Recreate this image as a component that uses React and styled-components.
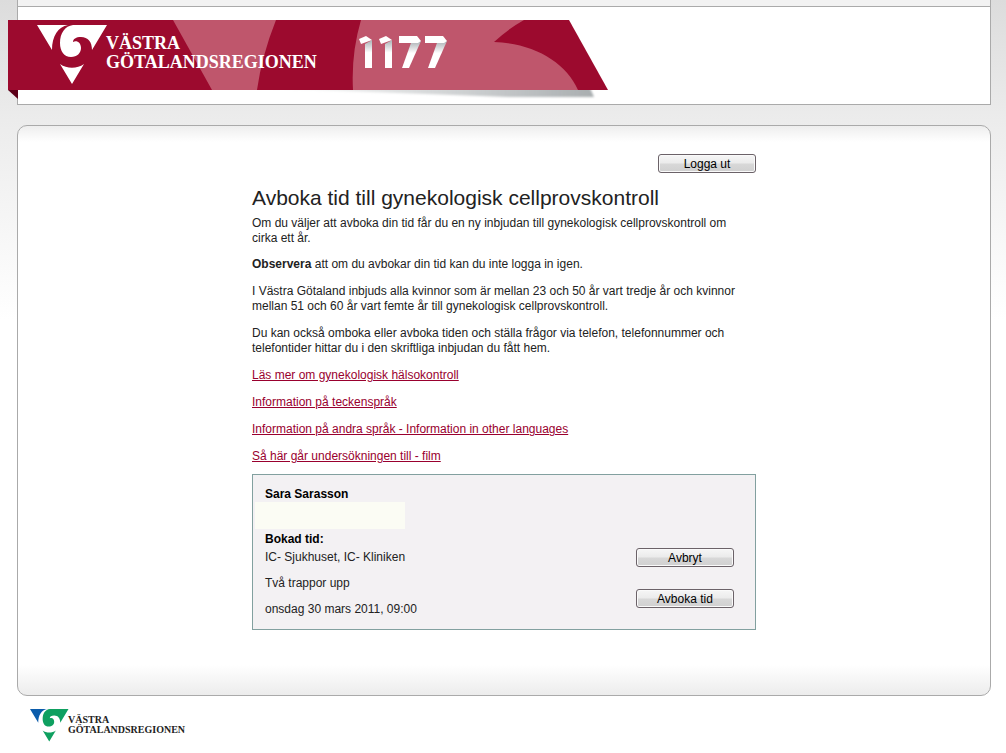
import React from "react";
import styled, { createGlobalStyle } from "styled-components";

const GlobalStyle = createGlobalStyle`
  body {
    margin: 0;
    background: linear-gradient(#dcdcdc, #ececec 120px, #ffffff 320px) no-repeat #ffffff;
    background-size: 100% 320px;
    color: #222222;
    font-family: "Liberation Sans", Arial, sans-serif;
    font-size: 12px;
    line-height: 15px;
  }
`;

const Page = styled.div`
  padding: 0 15px 0 17px;
`;

const Header = styled.header`
  border: 1px solid #aaaaaa;
  border-top: 0;
`;

const TopStrip = styled.div`
  height: 6px;
  background: #f2f2f2;
  border-bottom: 1px solid #aaaaaa;
`;

const HeaderBody = styled.div`
  padding: 13px 0 4px;
  background: #ffffff;
`;

const Banner = styled.svg`
  display: block;
  margin-left: -10px;
`;

const LogoText = styled.text`
  font-family: "Liberation Serif", "Times New Roman", serif;
  font-size: ${(props) => props.$size}px;
  font-weight: bold;
`;

const Main = styled.main`
  margin-top: 20px;
  padding: 28px 0 65px;
  border: 1px solid #aaaaaa;
  border-radius: 10px;
  background: linear-gradient(#eeeeee, #ffffff) top / 100% 16px no-repeat,
    linear-gradient(#ffffff, #ececec) bottom / 100% 30px no-repeat, #ffffff;
`;

const Content = styled.div`
  max-width: 504px;
  margin: 0 auto;
`;

const Toolbar = styled.div`
  display: flex;
  justify-content: flex-end;
`;

const Button = styled.button`
  width: 98px;
  height: 19px;
  padding: 0;
  border: 1px solid #6b6268;
  border-radius: 3px;
  background: linear-gradient(#f6f6f6 0%, #ebebeb 48%, #d8d8d8 52%, #d0d0d0 100%);
  box-shadow: inset 0 0 0 1px #fafafa;
  color: #000000;
  font: 12px "Liberation Sans", Arial, sans-serif;
`;

const Title = styled.h1`
  margin: 12px 0 6px;
  font-size: 21px;
  font-weight: normal;
  line-height: 25px;
`;

const Text = styled.p`
  margin: 0 0 12px;
  padding-right: 8px;
`;

const Lead = styled(Text)`
  margin-bottom: 11px;
`;

const LinkList = styled.ul`
  display: grid;
  gap: 12px;
  margin: 0 0 10px;
  padding: 0;
  list-style: none;
`;

const TextLink = styled.a`
  color: #99002e;
  text-decoration: underline;
`;

const Booking = styled.section`
  display: flex;
  justify-content: space-between;
  align-items: flex-end;
  padding: 12px 21px 12px 12px;
  border: 1px solid #82a09f;
  background: #f3f1f3;
`;

const PersonName = styled.h2`
  margin: 0;
  font-size: 12px;
  color: #000000;
`;

const HiddenNumber = styled.div`
  width: 150px;
  height: 27px;
  margin: 0 0 3px -10px;
  background: #fbfcf4;
`;

const BookingLabel = styled.h3`
  margin: 0 0 3px;
  font-size: 12px;
  color: #000000;
`;

const BookingLines = styled.div`
  display: grid;
  gap: 11px;
`;

const Actions = styled.div`
  display: grid;
  gap: 22px;
  padding-bottom: 9px;
`;

const Footer = styled.footer`
  padding: 13px 12px 8px;
`;

const FooterLogo = styled.svg`
  display: block;
`;

const links = [
  "Läs mer om gynekologisk hälsokontroll",
  "Information på teckenspråk",
  "Information på andra språk - Information in other languages",
  "Så här går undersökningen till - film",
];

const bookingLines = ["IC- Sjukhuset, IC- Kliniken", "Två trappor upp", "onsdag 30 mars 2011, 09:00"];

function Emblem({ left, right }) {
  return (
    <>
      <path fill={left} d="M0 0H31C21 2 15 11 15 25Z" />
      <path
        fill={right}
        d="M36 0H70L55 25C55 17 51 12 44 12C39 12 36 14 36 17C40 15 44 18 44 23C44 28 40 32 34 32C27 32 23 26 23 18C23 8 28 1 36 0Z"
      />
      <path fill={right} d="M23 39C30 44 40 44 47 39L35 59Z" />
    </>
  );
}

function HeaderBanner() {
  return (
    <Banner width="600" height="80" viewBox="0 0 600 80" role="img" aria-label="Västra Götalandsregionen 1177">
      <defs>
        <linearGradient id="shadow" x1="0" x2="1" y1="0" y2="0">
          <stop offset="0" stopColor="#b5b9bb" stopOpacity="0" />
          <stop offset="1" stopColor="#a9aeb0" />
        </linearGradient>
        <linearGradient id="fold" x1="0" x2="0" y1="0" y2="1">
          <stop offset="0" stopColor="#aab0b4" />
          <stop offset="0.45" stopColor="#ffffff" />
        </linearGradient>
        <filter id="soft" x="-5%" y="-50%" width="110%" height="200%">
          <feGaussianBlur stdDeviation="1" />
        </filter>
      </defs>
      <path fill="url(#shadow)" filter="url(#soft)" d="M250 68H582L586 77H500Z" />
      <path fill="#5c0018" d="M0 70H10V79Z" />
      <path fill="#9c0a2e" d="M0 0H561L600 70H0Z" />
      <path fill="#bf566c" d="M165 0H268Q254 35 249 70H204Z" />
      <path fill="#bf566c" d="M353 0H516Q500 9 486 22C525 23 558 42 570 70H345Q343 34 353 0Z" />
      <g transform="translate(29 5)">
        <Emblem left="#ffffff" right="#ffffff" />
      </g>
      <LogoText $size={18} fill="#ffffff" x="98" y="29">
        VÄSTRA
      </LogoText>
      <LogoText $size={18} fill="#ffffff" x="98" y="48">
        GÖTALANDSREGIONEN
      </LogoText>
      <path fill="url(#fold)" d="M357 24L364 20V48H357Z" />
      <path fill="url(#fold)" d="M377 24L384 20V48H377Z" />
      <path fill="url(#fold)" d="M403 23L413 21L401 48H394Z" />
      <path fill="url(#fold)" d="M429 23L439 21L427 48H420Z" />
      <path fill="#ffffff" d="M351 19L358 16L364 20L353 24Z" />
      <path fill="#ffffff" d="M371 19L378 16L384 20L373 24Z" />
      <path fill="#ffffff" d="M391 16H409L413 21L410 23H391Z" />
      <path fill="#ffffff" d="M417 16H435L439 21L436 23H417Z" />
    </Banner>
  );
}

function App() {
  return (
    <>
      <GlobalStyle />
      <Page>
        <Header>
          <TopStrip />
          <HeaderBody>
            <HeaderBanner />
          </HeaderBody>
        </Header>

        <Main>
          <Content>
            <Toolbar>
              <Button type="button">Logga ut</Button>
            </Toolbar>
            <Title>Avboka tid till gynekologisk cellprovskontroll</Title>
            <Lead>
              Om du väljer att avboka din tid får du en ny inbjudan till gynekologisk cellprovskontroll om cirka ett år.
            </Lead>
            <Text>
              <b>Observera</b> att om du avbokar din tid kan du inte logga in igen.
            </Text>
            <Text>
              I Västra Götaland inbjuds alla kvinnor som är mellan 23 och 50 år vart tredje år och kvinnor mellan 51 och
              60 år vart femte år till gynekologisk cellprovskontroll.
            </Text>
            <Text>
              Du kan också omboka eller avboka tiden och ställa frågor via telefon, telefonnummer och telefontider
              hittar du i den skriftliga inbjudan du fått hem.
            </Text>
            <LinkList>
              {links.map((link) => (
                <li key={link}>
                  <TextLink href="#">{link}</TextLink>
                </li>
              ))}
            </LinkList>

            <Booking>
              <div>
                <PersonName>Sara Sarasson</PersonName>
                <HiddenNumber />
                <BookingLabel>Bokad tid:</BookingLabel>
                <BookingLines>
                  {bookingLines.map((line) => (
                    <div key={line}>{line}</div>
                  ))}
                </BookingLines>
              </div>
              <Actions>
                <Button type="button">Avbryt</Button>
                <Button type="button">Avboka tid</Button>
              </Actions>
            </Booking>
          </Content>
        </Main>

        <Footer>
          <FooterLogo width="170" height="34" viewBox="0 0 170 34" role="img" aria-label="Västra Götalandsregionen">
            <g transform="translate(1 0) scale(0.55)">
              <Emblem left="#0b5cab" right="#0fa060" />
            </g>
            <LogoText $size={10} fill="#222222" x="39" y="14">
              VÄSTRA
            </LogoText>
            <LogoText $size={10} fill="#222222" x="39" y="24">
              GÖTALANDSREGIONEN
            </LogoText>
          </FooterLogo>
        </Footer>
      </Page>
    </>
  );
}

export default App;
